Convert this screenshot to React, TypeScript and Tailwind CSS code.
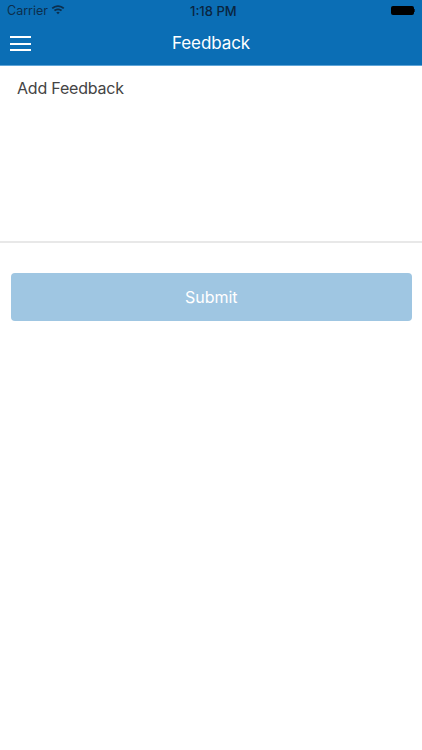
export default function App() {
  return (
    <div className="w-[422px] h-[750px] bg-white overflow-hidden flex flex-col font-['Inter','Liberation_Sans',sans-serif]">
      <header className="h-[66px] shrink-0 bg-[#0b6eb5] border-b border-[#5fa5d8] flex flex-col">
        <div className="h-[21px] flex items-center px-[7px] text-[13px] text-[#0c2f4d] relative">
          <span className="absolute left-[7px] top-[3px] leading-[16px] text-[12.5px]">Carrier</span>
          <svg className="absolute left-[51px] top-[4px]" width="14" height="11" viewBox="0 0 13 10" fill="none">
            <path d="M0.6 3.4 C4 0.2 9 0.2 12.4 3.4 L11.3 4.6 C8.4 1.9 4.6 1.9 1.7 4.6 Z" fill="#0c2f4d" />
            <path d="M2.7 5.5 C4.9 3.6 8.1 3.6 10.3 5.5 L9.2 6.7 C7.6 5.4 5.4 5.4 3.8 6.7 Z" fill="#0c2f4d" />
            <path d="M4.9 7.7 C5.9 7 7.1 7 8.1 7.7 L6.5 9.5 Z" fill="#0c2f4d" />
          </svg>
          <span className="absolute left-[190px] top-[3px] leading-[16px] font-medium text-[13px] text-[#0a2540]">1:18 PM</span>
          <div className="absolute left-[391px] top-[6px] flex items-center">
            <div className="w-[23px] h-[9px] rounded-[2px] bg-black" />
            <div className="w-[1px] h-[3px] bg-[#0a2540]" />
          </div>
        </div>
        <div className="flex-1 flex items-center relative pt-[1px]">
          <div className="absolute left-[10px] top-[15px] w-[21px] flex flex-col gap-[4.5px]">
            <div className="h-[2px] bg-white" />
            <div className="h-[2px] bg-white" />
            <div className="h-[2px] bg-white" />
          </div>
          <div className="w-full text-center text-white text-[17px] tracking-[-0.1px]">Feedback</div>
        </div>
      </header>
      <div className="h-[177px] shrink-0 border-b-2 border-[#e8e8e8] px-[17px] pt-[11px] text-[#444444] text-[16px] tracking-[-0.2px] leading-[22px]">
        Add Feedback
      </div>
      <div className="pl-[11px] pr-[10.5px] pt-[30px]">
        <button className="w-full h-[48px] rounded-[4px] bg-[#9fc6e2] text-white text-[16px] flex items-center justify-center">
          Submit
        </button>
      </div>
    </div>
  );
}
